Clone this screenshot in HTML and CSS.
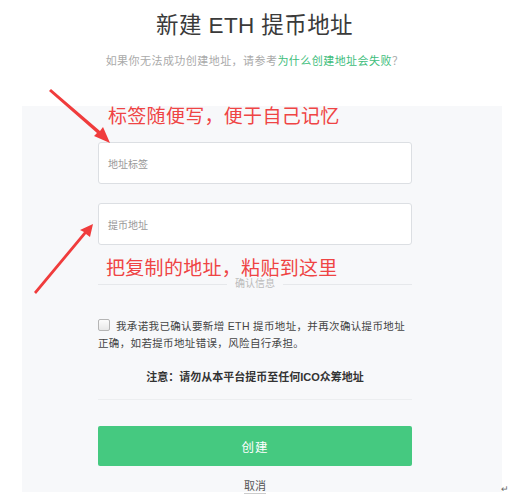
FILE: index.html
```html
<!DOCTYPE html>
<html lang="zh-CN">
<head>
<meta charset="utf-8">
<link rel="stylesheet" href="styles.css">
</head>
<body>
<div class="page">
  <h1 class="title">新建 ETH 提币地址</h1>
  <p class="subtitle">如果你无法成功创建地址，请参考<a class="link" href="#">为什么创建地址会失败</a>？</p>
  <div class="panel">
    <div class="form">
      <div class="note note-1">标签随便写，便于自己记忆</div>
      <div class="input"><span class="ph">地址标签</span></div>
      <div class="input input-2"><span class="ph">提币地址</span></div>
      <div class="note note-2">把复制的地址，粘贴到这里</div>
      <div class="divider"><span class="divider-text">确认信息</span></div>
      <p class="agree"><span class="check"></span>我承诺我已确认要新增 ETH 提币地址，并再次确认提币地址正确，如若提币地址错误，风险自行承担。</p>
      <p class="warn">注意：请勿从本平台提币至任何ICO众筹地址</p>
      <div class="rule"></div>
      <div class="btn">创建</div>
      <div class="cancel-row"><a class="cancel" href="#">取消</a></div>
    </div>
  </div>
  <svg class="arrows" width="509" height="499" viewBox="0 0 509 499">
    <polygon fill="#f03c3c" points="49,91 51,89 100,131 103,127 110,143 94,136 97,133"/>
    <polygon fill="#f03c3c" points="34,292 36,294 86,234 90,237 93,224 80,230 84,232"/>
  </svg>
  <span class="mark">↵</span>
</div>
</body>
</html>
```
FILE: styles.css
```css
* { box-sizing: border-box; }
html, body { margin: 0; padding: 0; background: #fff; }
body {
  font-family: "Liberation Sans", "Noto Sans CJK SC", sans-serif;
  color: #333;
}
.page {
  position: relative;
  width: 509px;
  height: 499px;
  overflow: hidden;
}
.title {
  margin: 0;
  padding-top: 11px;
  font-size: 22.5px;
  line-height: 30px;
  font-weight: normal;
  text-align: center;
  color: #3a3a3a;
  letter-spacing: 0.4px;
}
.subtitle {
  margin: 12px 0 0;
  font-size: 11px;
  line-height: 16px;
  text-align: center;
  color: #aaa;
  letter-spacing: 0.45px;
}
.link { color: #3ebd7b; text-decoration: none; }
.panel {
  margin: 37px 0 0 22px;
  width: 480px;
  height: 386px;
  background: #f7f8fa;
  padding-left: 76px;
}
.form { width: 314px; }
.note {
  color: #ef4444;
  font-size: 19px;
  letter-spacing: 0.3px;
  white-space: nowrap;
}
.note-1 { line-height: 22px; margin-left: 10px; }
.note-2 { line-height: 20px; margin-top: 14px; margin-left: 8px; }
.input {
  margin-top: 14px;
  height: 42px;
  background: #fff;
  border: 1px solid #dcdfe3;
  border-radius: 3px;
  display: flex;
  align-items: center;
  padding-left: 9px;
}
.input-2 { margin-top: 19px; }
.ph { font-size: 10px; color: #999; }
.divider {
  height: 10px;
  display: flex;
  align-items: center;
  justify-content: center;
  gap: 8px;
}
.divider::before, .divider::after {
  content: "";
  flex: 1;
  height: 1px;
  background: #e6e8eb;
}
.divider-text { font-size: 10px; color: #bbb; line-height: 10px; }
.agree {
  margin: 29px 0 0;
  font-size: 10.5px;
  line-height: 17px;
  letter-spacing: 0.35px;
  color: #444;
}
.check {
  display: inline-block;
  width: 12px;
  height: 12px;
  border: 1px solid #b5b5b5;
  border-radius: 2px;
  background: linear-gradient(#fcfcfc, #e8e8e8);
  vertical-align: -1px;
  margin-right: 6px;
}
.warn {
  margin: 17px 0 0;
  font-size: 11px;
  line-height: 16px;
  font-weight: bold;
  text-align: center;
  color: #333;
}
.rule { margin-top: 14px; height: 1px; background: #eceef0; }
.btn {
  margin-top: 26px;
  height: 40px;
  background: #45c980;
  border-radius: 2px;
  color: #fff;
  font-size: 12.5px;
  letter-spacing: 1px;
  display: flex;
  align-items: center;
  justify-content: center;
}
.cancel-row { margin-top: 12px; text-align: center; line-height: 14px; }
.cancel {
  font-size: 11px;
  color: #555;
  text-decoration: none;
  padding-bottom: 1px;
  border-bottom: 1px solid #ccc;
}
.arrows { position: absolute; left: 0; top: 0; pointer-events: none; }
.mark {
  position: absolute;
  right: 0;
  top: 484px;
  font-size: 9px;
  color: #666;
}
```
